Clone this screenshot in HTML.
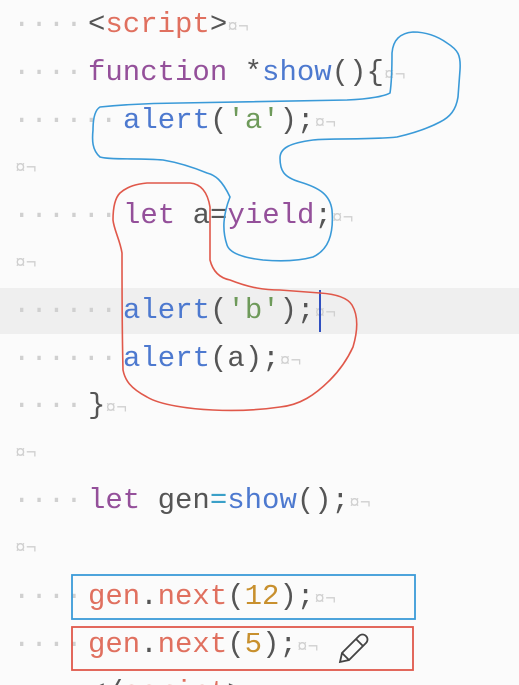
<!DOCTYPE html>
<html style="width:519px;height:685px;overflow:hidden"><head><meta charset="utf-8"><style>
html,body{margin:0;padding:0;}
body{width:519px;height:685px;overflow:hidden;background:#fbfbfb;position:relative;font-family:"Liberation Mono","DejaVu Sans Mono",monospace;font-size:29px;}
.l{position:absolute;left:0;height:48px;line-height:48px;white-space:pre;width:519px;}
.d{position:absolute;left:13px;color:#d0d0d0;}
.c{position:absolute;}
.e{position:absolute;left:15px;color:#cfcfcf;font-size:18px;}
.m{color:#d0d0d0;font-size:18px;}
.t{color:#e0705f}.k{color:#94509a}.f{color:#4d79cf}.p{color:#555}.s{color:#6e9a5a}.n{color:#c8902e}.v{color:#555}.o{color:#3aa0c8}
</style></head><body>
<div class="l" style="top:288px;background:#efefef;height:46px"></div>
<div class="l" style="top:1px"><span class="d">····</span><span class="c" style="left:88px"><span class="p">&lt;</span><span class="t">script</span><span class="p">&gt;</span><span class="m">¤¬</span></span></div>
<div class="l" style="top:49px"><span class="d">····</span><span class="c" style="left:88px"><span class="k">function</span> <span class="p">*</span><span class="f">show</span><span class="p">(){</span><span class="m">¤¬</span></span></div>
<div class="l" style="top:97px"><span class="d">······</span><span class="c" style="left:123px"><span class="f">alert</span><span class="p">(</span><span class="s">'a'</span><span class="p">);</span><span class="m">¤¬</span></span></div>
<div class="l" style="top:145px"><span class="e">¤¬</span></div>
<div class="l" style="top:192px"><span class="d">······</span><span class="c" style="left:123px"><span class="k">let</span> <span class="v">a</span><span class="p">=</span><span class="k">yield</span><span class="p">;</span><span class="m">¤¬</span></span></div>
<div class="l" style="top:240px"><span class="e">¤¬</span></div>
<div class="l" style="top:287px"><span class="d">······</span><span class="c" style="left:123px"><span class="f">alert</span><span class="p">(</span><span class="s">'b'</span><span class="p">);</span><span class="m">¤¬</span></span></div>
<div class="l" style="top:335px"><span class="d">······</span><span class="c" style="left:123px"><span class="f">alert</span><span class="p">(a);</span><span class="m">¤¬</span></span></div>
<div class="l" style="top:382px"><span class="d">····</span><span class="c" style="left:88px"><span class="p">}</span><span class="m">¤¬</span></span></div>
<div class="l" style="top:430px"><span class="e">¤¬</span></div>
<div class="l" style="top:477px"><span class="d">····</span><span class="c" style="left:88px"><span class="k">let</span> <span class="v">gen</span><span class="o">=</span><span class="f">show</span><span class="p">();</span><span class="m">¤¬</span></span></div>
<div class="l" style="top:525px"><span class="e">¤¬</span></div>
<div class="l" style="top:573px"><span class="d">····</span><span class="c" style="left:88px"><span class="t">gen</span><span class="p">.</span><span class="t">next</span><span class="p">(</span><span class="n">12</span><span class="p">);</span><span class="m">¤¬</span></span></div>
<div class="l" style="top:621px"><span class="d">····</span><span class="c" style="left:88px"><span class="t">gen</span><span class="p">.</span><span class="t">next</span><span class="p">(</span><span class="n">5</span><span class="p">);</span><span class="m">¤¬</span></span></div>
<div class="l" style="top:669px"><span class="d">····</span><span class="c" style="left:88px"><span class="p">&lt;/</span><span class="t">script</span><span class="p">&gt;</span></span></div>
<div style="position:absolute;left:319px;top:290px;width:2px;height:42px;background:#3050c0"></div>
<svg width="519" height="685" style="position:absolute;left:0;top:0" fill="none" stroke-width="1.6">
<path stroke="#3a9ad8" d="M392,53 C393,40 400,33 413,32 C428,32 440,38 447,43 C458,50 461,55 460,70 L458,97 C456,110 450,117 440,122 C425,130 410,134 397,137 C370,140 330,138 313,140 C290,143 280,148 280,158 C280,170 283,177 300,182 C320,188 330,195 332,210 C334,235 328,250 313,257 C295,262 275,261 263,260 C245,258 230,254 227,245 C222,230 223,215 230,197 C222,180 215,175 207,173 C190,166 175,162 163,160 C140,158 110,160 100,157 C92,150 92,140 93,130 C93,118 95,110 100,107 C130,104 150,103 180,103 C250,102 300,101 347,100 C370,99 385,96 390,93 C392,80 392,65 392,53"/>
<path stroke="#e0584a" d="M320,293 C335,294 347,297 352,305 C358,315 358,330 353,347 C347,360 340,370 330,380 C315,395 300,405 280,407 C260,410 235,411 213,410 C190,409 160,405 147,397 C130,388 125,380 123,370 C122,330 122,290 122,253 C120,240 114,230 113,220 C113,205 116,197 120,193 C128,186 137,184 147,183 L190,183 C203,184 208,195 210,207 L210,260 C213,272 220,278 230,280 C250,288 265,290 280,290 L320,293"/>
<rect x="72" y="575" width="343" height="44" stroke="#3a9ad8" stroke-width="1.8"/>
<rect x="72" y="627" width="341" height="43" stroke="#e0584a" stroke-width="1.8"/>
<g stroke="#444" stroke-width="1.8" fill="#fbfbfb"><path d="M340,662 L342,653 L359,636 C361,634 364,634 366,636 C368,638 368,641 366,643 L349,660 Z"/><path d="M356,639 L363,646"/><path d="M342,653 L349,660"/></g>
</svg>
</body></html>
